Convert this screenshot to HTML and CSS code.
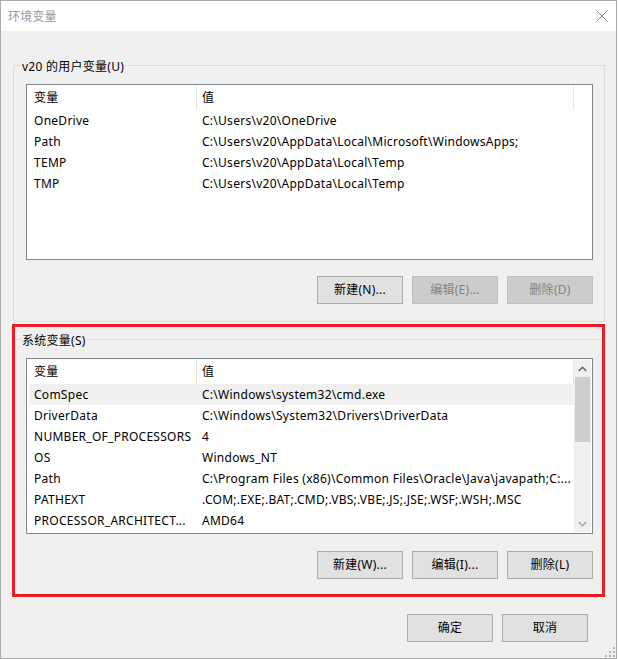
FILE: index.html
```html
<!DOCTYPE html>
<html lang="zh-CN">
<head>
<meta charset="utf-8">
<title>环境变量</title>
<link rel="stylesheet" href="styles.css">
</head>
<body>
<div class="window">
  <div class="titlebar">
    <span class="title">环境变量</span>
    <svg class="close" width="12" height="12" viewBox="0 0 12 12"><path d="M0.5 0.5 L11.5 11.5 M11.5 0.5 L0.5 11.5" stroke="#8f8f8f" stroke-width="1" fill="none"/></svg>
  </div>
  <div class="content">
    <section class="group">
      <div class="group-title">v20 的用户变量(U)</div>
      <div class="list">
        <div class="list-main">
          <div class="list-header"><div class="hcell">变量</div><div class="hcell">值</div><div class="hcell"></div></div>
          <div class="row"><div class="name">OneDrive</div><div class="value">C:\Users\v20\OneDrive</div></div>
          <div class="row"><div class="name">Path</div><div class="value">C:\Users\v20\AppData\Local\Microsoft\WindowsApps;</div></div>
          <div class="row"><div class="name">TEMP</div><div class="value">C:\Users\v20\AppData\Local\Temp</div></div>
          <div class="row"><div class="name">TMP</div><div class="value">C:\Users\v20\AppData\Local\Temp</div></div>
        </div>
      </div>
      <div class="buttons">
        <button class="btn">新建(N)...</button>
        <button class="btn" disabled>编辑(E)...</button>
        <button class="btn" disabled>删除(D)</button>
      </div>
    </section>
    <section class="group group-sys">
      <div class="group-title">系统变量(S)</div>
      <div class="list">
        <div class="list-main">
          <div class="list-header"><div class="hcell">变量</div><div class="hcell">值</div><div class="hcell"></div></div>
          <div class="row selected"><div class="name">ComSpec</div><div class="value">C:\Windows\system32\cmd.exe</div></div>
          <div class="row"><div class="name">DriverData</div><div class="value">C:\Windows\System32\Drivers\DriverData</div></div>
          <div class="row"><div class="name">NUMBER_OF_PROCESSORS</div><div class="value">4</div></div>
          <div class="row"><div class="name">OS</div><div class="value">Windows_NT</div></div>
          <div class="row"><div class="name">Path</div><div class="value">C:\Program Files (x86)\Common Files\Oracle\Java\javapath;C:...</div></div>
          <div class="row"><div class="name">PATHEXT</div><div class="value">.COM;.EXE;.BAT;.CMD;.VBS;.VBE;.JS;.JSE;.WSF;.WSH;.MSC</div></div>
          <div class="row"><div class="name">PROCESSOR_ARCHITECT...</div><div class="value">AMD64</div></div>
        </div>
        <div class="scrollbar">
          <div class="sb-btn"><svg width="9" height="6" viewBox="0 0 9 6"><path d="M0.8 5 L4.5 1.3 L8.2 5" stroke="#606060" stroke-width="1.4" fill="none"/></svg></div>
          <div class="sb-thumb"></div>
          <div class="sb-track"></div>
          <div class="sb-btn"><svg width="9" height="6" viewBox="0 0 9 6"><path d="M0.8 1 L4.5 4.7 L8.2 1" stroke="#a3a3a3" stroke-width="1.4" fill="none"/></svg></div>
        </div>
      </div>
      <div class="buttons">
        <button class="btn">新建(W)...</button>
        <button class="btn">编辑(I)...</button>
        <button class="btn">删除(L)</button>
      </div>
    </section>
    <div class="footer">
      <button class="btn">确定</button>
      <button class="btn">取消</button>
    </div>
  </div>
  <div class="annotation"></div>
  <svg class="grip" width="10" height="10" viewBox="0 0 10 10">
    <rect x="8" y="0" width="2" height="2" fill="#b4b4b4"/>
    <rect x="4" y="4" width="2" height="2" fill="#b4b4b4"/>
    <rect x="8" y="4" width="2" height="2" fill="#b4b4b4"/>
    <rect x="0" y="8" width="2" height="2" fill="#b4b4b4"/>
    <rect x="4" y="8" width="2" height="2" fill="#b4b4b4"/>
    <rect x="8" y="8" width="2" height="2" fill="#b4b4b4"/>
  </svg>
</div>
</body>
</html>
```

FILE: styles.css
```css
* { box-sizing: border-box; }
html, body { margin: 0; padding: 0; background: #ffffff; }
body {
  font-family: "Noto Sans", "Noto Sans CJK SC", sans-serif;
  font-size: 12px;
  letter-spacing: 0.27px;
  color: #000;
}
.window {
  position: relative;
  width: 617px;
  height: 659px;
  border: 1px solid #aaaaaa;
  background: #f0f0f0;
  display: flex;
  flex-direction: column;
}
.titlebar {
  flex: none;
  height: 30px;
  background: #ffffff;
  display: flex;
  align-items: center;
  padding-left: 7px;
}
.title {
  color: #999999;
  font-family: "Noto Sans CJK SC", sans-serif;
  letter-spacing: 0.2px;
  line-height: 16px;
}
.close { margin-left: auto; margin-right: 8px; }
.content {
  flex: 1;
  padding: 34px 11px 0 12px;
  display: flex;
  flex-direction: column;
}
.group {
  border: 1px solid #dcdcdc;
  padding: 0 11px 17px 12px;
}
.group + .group { margin-top: 17px; }
.group-title {
  width: fit-content;
  margin: -7px 0 0 -5px;
  padding: 0 1px;
  background: #f0f0f0;
  line-height: 16px;
}
.list {
  height: 176px;
  margin-top: 9px;
  border: 1px solid #828790;
  padding: 1px;
  background: #ffffff;
  display: flex;
  overflow: hidden;
}
.list-main { flex: 1; min-width: 0; }
.list-header {
  display: grid;
  grid-template-columns: 168px 377px 1fr;
  height: 24px;
}
.hcell { line-height: 24px; padding-left: 6px; }
.hcell + .hcell { border-left: 1px solid #e5e5e5; padding-left: 5px; }
.row {
  display: grid;
  grid-template-columns: 166px 1fr;
  height: 21px;
  line-height: 21px;
  margin-left: 2px;
  white-space: nowrap;
}
.row > div { overflow: hidden; }
.row .name { padding-left: 4px; }
.row .value { padding-left: 6px; }
.row.selected { background: #f0f0f0; }
.scrollbar {
  flex: none;
  width: 17px;
  background: #f0f0f0;
  display: flex;
  flex-direction: column;
  align-items: center;
}
.sb-btn {
  flex: none;
  width: 17px;
  height: 17px;
  display: flex;
  align-items: center;
  justify-content: center;
}
.sb-thumb { flex: none; width: 15px; height: 65px; background: #cdcdcd; }
.sb-track { flex: 1; }
.buttons {
  display: flex;
  justify-content: flex-end;
  gap: 9px;
  margin-top: 16px;
}
.group-sys .buttons { margin-top: 17px; }
.btn {
  width: 86px;
  height: 28px;
  padding: 0;
  border: 1px solid #adadad;
  background: #e1e1e1;
  color: #000;
  font: inherit;
  letter-spacing: inherit;
  line-height: 26px;
  text-align: center;
}
.btn:disabled {
  background: #cccccc;
  border-color: #bfbfbf;
  color: #838383;
}
.footer {
  display: flex;
  justify-content: flex-end;
  gap: 9px;
  margin-top: 17px;
  padding-right: 17px;
}
.annotation {
  position: absolute;
  left: 11px;
  top: 323px;
  width: 593px;
  height: 273px;
  border: 3px solid #ed1c24;
}
.grip {
  position: absolute;
  left: 604px;
  top: 646px;
}
```
